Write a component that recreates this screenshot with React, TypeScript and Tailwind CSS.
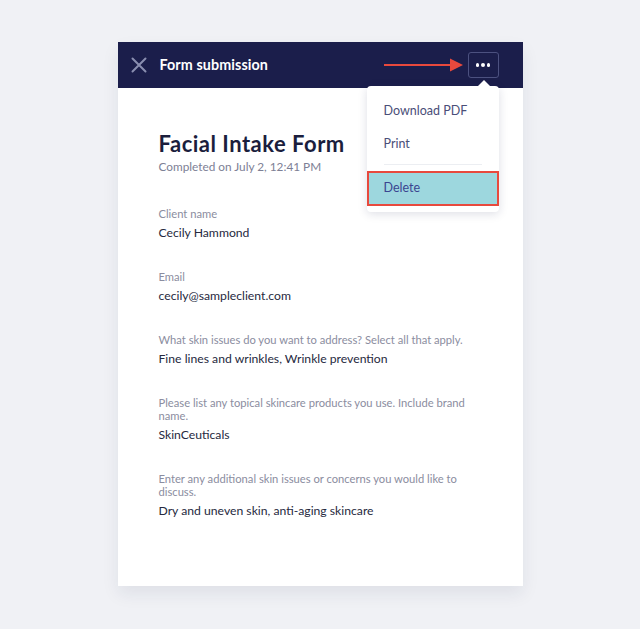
import React from 'react';

const fields = [
  { label: 'Client name', value: 'Cecily Hammond' },
  { label: 'Email', value: 'cecily@sampleclient.com' },
  { label: 'What skin issues do you want to address? Select all that apply.', value: 'Fine lines and wrinkles, Wrinkle prevention' },
  { label: 'Please list any topical skincare products you use. Include brand name.', value: 'SkinCeuticals' },
  { label: 'Enter any additional skin issues or concerns you would like to discuss.', value: 'Dry and uneven skin, anti-aging skincare' },
];

export default function App() {
  return (
    <div className="min-h-[629px] w-full bg-[#f0f1f5] flex justify-center pt-[42px]" style={{ fontFamily: 'Lato, "Noto Sans", sans-serif' }}>
      <div className="relative w-[405px] h-[544px] bg-white shadow-[0_8px_16px_rgba(30,35,80,0.08)]">
        {/* header */}
        <div className="h-[46px] bg-[#1b1e4b] flex items-center pl-[13px] pr-[24px]">
          <svg width="16" height="16" viewBox="0 0 16 16" className="text-[#8a8eb0]">
            <path d="M1.5 1.5 L14.5 14.5 M14.5 1.5 L1.5 14.5" stroke="currentColor" strokeWidth="2" strokeLinecap="round" />
          </svg>
          <span className="ml-[13px] text-white font-bold text-[14.3px] tracking-[0.1px]">Form submission</span>
          <div className="flex-1" />
          <svg width="80" height="14" viewBox="0 0 80 14" className="mr-[4px]">
            <line x1="0" y1="7" x2="68" y2="7" stroke="#e8493d" strokeWidth="2.2" />
            <path d="M66 0.5 L79 7 L66 13.5 Z" fill="#e8493d" />
          </svg>
          <div className="w-[31px] h-[26px] border border-[#4c5180] rounded-[3px] flex items-center justify-center gap-[2px]">
            <span className="w-[3.5px] h-[3.5px] rounded-full bg-white" />
            <span className="w-[3.5px] h-[3.5px] rounded-full bg-white" />
            <span className="w-[3.5px] h-[3.5px] rounded-full bg-white" />
          </div>
        </div>

        {/* body */}
        <div className="pl-[41px] pr-[40px] pt-[43px]">
          <h1 className="text-[22px] leading-[26px] font-bold tracking-[0.5px] text-[#1b1e3d]">Facial Intake Form</h1>
          <p className="mt-[2px] text-[11.8px] leading-[16px] text-[#7d8095]">Completed on July 2, 12:41 PM</p>
          <div className="mt-[32px] flex flex-col gap-[28px]">
            {fields.map((f) => (
              <div key={f.label}>
                <div className="text-[11.2px] leading-[13px] text-[#8b8da0]">{f.label}</div>
                <div className="mt-[4px] text-[12.2px] leading-[18px] text-[#262940]">{f.value}</div>
              </div>
            ))}
          </div>
        </div>

        {/* dropdown */}
        <div className="absolute left-[249px] top-[44px] w-[132px] bg-white rounded-[4px] shadow-[0_2px_10px_rgba(30,35,80,0.15)] pt-[14px] pb-[6px]">
          <div className="absolute -top-[6px] right-[9px] w-0 h-0 border-l-[6px] border-r-[6px] border-b-[6px] border-l-transparent border-r-transparent border-b-white" />
          <div className="px-[17px] h-[22px] flex items-center text-[12.5px] text-[#4a4e78]">Download PDF</div>
          <div className="px-[17px] mt-[11px] h-[22px] flex items-center text-[12.5px] text-[#4a4e78]">Print</div>
          <div className="mx-[17px] mt-[9px] border-t border-[#eceef2]" />
          <div className="mt-[6px] h-[35px] bg-[#9dd7de] border-2 border-[#e8493d] flex items-center px-[15px] text-[12.5px] text-[#3a4590]">Delete</div>
        </div>
      </div>
    </div>
  );
}
